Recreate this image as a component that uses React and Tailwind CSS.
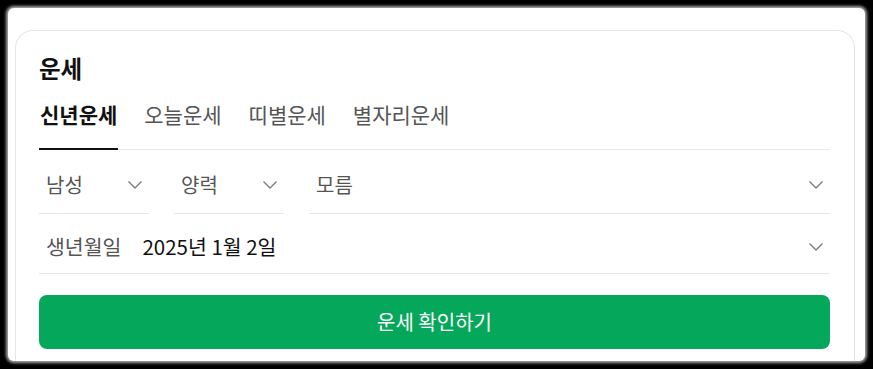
import React, { useState } from "react";

const TABS = ["신년운세", "오늘운세", "띠별운세", "별자리운세"];
const FONT = { fontFamily: '"Noto Sans CJK KR", "Noto Sans", sans-serif' };

function Chevron() {
  return (
    <svg width="16" height="10" viewBox="0 0 16 10" className="shrink-0">
      <polyline points="1.5,1.5 8,8 14.5,1.5" fill="none" stroke="#7a7a7a" strokeWidth="1.3" />
    </svg>
  );
}

function SelectBox({ value, className }) {
  return (
    <div className={`flex h-[64px] items-center justify-between border-b border-[#e6e6e6] pl-[7px] pr-[6px] pt-[7px] ${className}`}>
      <span className="text-[20px] text-[#555]">{value}</span>
      <Chevron />
    </div>
  );
}

export default function App() {
  const [tab, setTab] = useState("신년운세");

  return (
    <div className="h-[369px] w-[873px] overflow-hidden bg-black p-[8px]" style={FONT}>
      <div className="h-[353px] overflow-hidden rounded-[6px] bg-white shadow-[0_0_3px_2px_#a8a8a8]">
        <div className="ml-[7px] mt-[22px] w-[840px] rounded-t-[18px] border border-b-0 border-[#e6e6e6] pb-6 pl-[23px] pr-[24px] pt-[19px]">
          <h2 className="text-[23.5px] font-bold leading-[36px] text-[#111]">운세</h2>

          <div className="mt-[6px] flex gap-[25px] border-b border-[#ebebeb]">
            {TABS.map((t) => (
              <button
                key={t}
                type="button"
                onClick={() => setTab(t)}
                className={[
                  "-mb-px h-[58px] px-px pb-[14px] text-[21px] leading-[44px]",
                  tab === t ? "border-b-2 border-[#111] font-bold text-[#111]" : "border-b-2 border-transparent text-[#555]"
                ].join(" ")}
              >
                {t}
              </button>
            ))}
          </div>

          <div className="flex gap-[25px]">
            <SelectBox value="남성" className="w-[110px]" />
            <SelectBox value="양력" className="w-[110px]" />
            <SelectBox value="모름" className="flex-1" />
          </div>

          <div className="flex h-[60px] items-center border-b border-[#e6e6e6] pl-[7px] pr-[6px] pt-[6px]">
            <span className="text-[20.5px] text-[#555]">생년월일</span>
            <span className="ml-[21px] flex-1 text-[20.5px] text-[#111]">2025년 1월 2일</span>
            <Chevron />
          </div>

          <button
            type="button"
            className="mt-[21px] h-[54px] w-full rounded-[8px] bg-[#05a85a] text-[20px] text-white"
          >
            운세 확인하기
          </button>
        </div>
      </div>
    </div>
  );
}
